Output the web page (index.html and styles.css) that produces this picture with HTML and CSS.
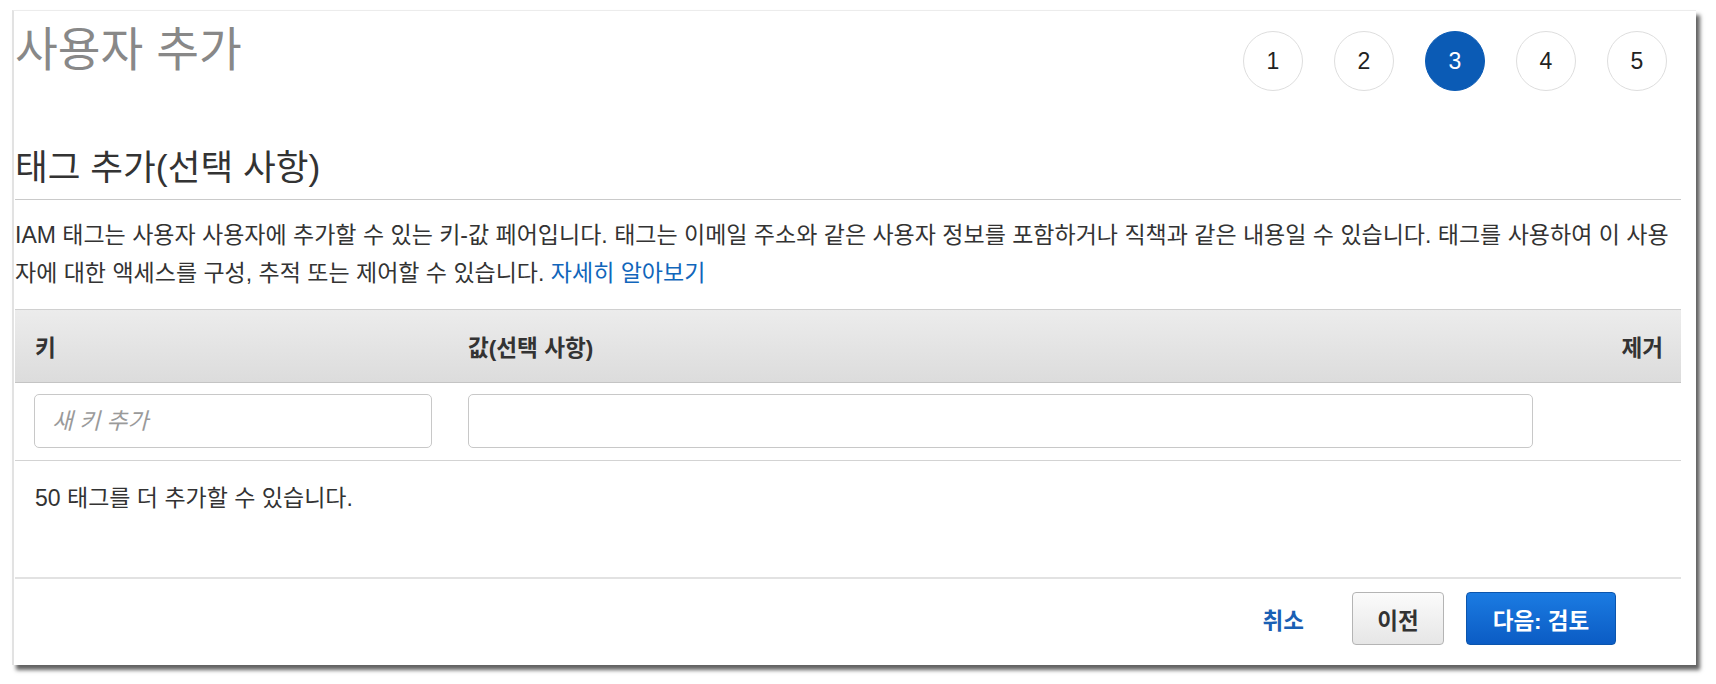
FILE: index.html
```html
<!DOCTYPE html>
<html lang="ko">
<head>
<meta charset="utf-8">
<title>사용자 추가</title>
<link rel="stylesheet" href="styles.css">
</head>
<body>
<div class="page">
<div class="window">
  <header class="top">
    <h1 class="title">사용자 추가</h1>
    <ol class="steps">
      <li class="step">1</li>
      <li class="step">2</li>
      <li class="step active">3</li>
      <li class="step">4</li>
      <li class="step">5</li>
    </ol>
  </header>

  <h2 class="section-title">태그 추가(선택 사항)</h2>
  <p class="desc">IAM 태그는 사용자 사용자에 추가할 수 있는 키-값 페어입니다. 태그는 이메일 주소와 같은 사용자 정보를 포함하거나 직책과 같은 내용일 수 있습니다. 태그를 사용하여 이 사용<br>자에 대한 액세스를 구성, 추적 또는 제어할 수 있습니다. <a class="link" href="#">자세히 알아보기</a></p>

  <div class="tags">
    <div class="tags-grid tags-head">
      <div class="col-key">키</div>
      <div class="col-value">값(선택 사항)</div>
      <div class="col-remove">제거</div>
    </div>
    <div class="tags-grid tags-row">
      <input class="field" type="text" placeholder="새 키 추가">
      <input class="field" type="text">
      <div class="col-remove"></div>
    </div>
  </div>

  <p class="remaining">50 태그를 더 추가할 수 있습니다.</p>

  <footer class="actions">
    <a class="cancel" href="#">취소</a>
    <button class="btn btn-prev" type="button">이전</button>
    <button class="btn btn-next" type="button">다음: 검토</button>
  </footer>
</div>
</div>
</body>
</html>
```

FILE: styles.css
```css
* {
  box-sizing: border-box;
}

html, body {
  margin: 0;
  padding: 0;
  background: #ffffff;
}

body {
  font-family: "Liberation Sans", "Noto Sans CJK KR", sans-serif;
  color: #333333;
}

.page {
  min-height: 684px;
  padding: 10px 0 0 12px;
}

.window {
  width: 1684px;
  height: 655px;
  background: #ffffff;
  border-top: 1px solid #ececec;
  border-left: 2px solid #e2e2e2;
  padding: 0 15px 0 1px;
  box-shadow: 4px 5px 4px rgba(0, 0, 0, 0.62);
}

/* header */
.top {
  margin-top: 13px;
  display: flex;
  justify-content: space-between;
  align-items: flex-start;
}

.title {
  margin: 0;
  font-size: 46.5px;
  line-height: 52px;
  font-weight: normal;
  color: #888888;
}

.steps {
  list-style: none;
  margin: 7px 14px 0 0;
  padding: 0;
  display: flex;
  gap: 31px;
}

.step {
  width: 60px;
  height: 60px;
  border-radius: 50%;
  border: 1.5px solid #dedede;
  display: flex;
  align-items: center;
  justify-content: center;
  font-family: "Liberation Sans", sans-serif;
  font-size: 23px;
  color: #222222;
  background: #ffffff;
}

.step.active {
  background: #0b5bb5;
  border-color: #0b5bb5;
  color: #ffffff;
}

/* section */
.section-title {
  margin: 57px 0 0 0;
  font-size: 35.6px;
  line-height: 40px;
  font-weight: normal;
  color: #333333;
  padding-bottom: 11px;
  border-bottom: 1px solid #cacaca;
}

.desc {
  margin: 16px 0 0 0;
  font-size: 23px;
  line-height: 38px;
  color: #333333;
}

.link {
  color: #1166bb;
  text-decoration: none;
}

/* tags table */
.tags {
  margin-top: 17px;
}

.tags-grid {
  display: grid;
  grid-template-columns: 398px 1065px 1fr;
  column-gap: 36px;
  padding: 0 18px 0 19px;
  align-items: center;
}

.tags-head {
  height: 74px;
  border-top: 1px solid #d0d0d0;
  border-bottom: 1px solid #c4c4c4;
  background: linear-gradient(#ececec, #dcdcdc);
  font-size: 22.6px;
  font-weight: bold;
  color: #333333;
}

.col-key {
  padding-left: 1px;
}

.col-remove {
  text-align: right;
}

.tags-row {
  padding-top: 11px;
  padding-bottom: 12px;
  border-bottom: 1px solid #d3d3d3;
}

.field {
  display: block;
  width: 100%;
  height: 54px;
  margin: 0;
  border: 1px solid #c8c8c8;
  border-radius: 5px;
  padding: 0 17px;
  background: #ffffff;
  font-family: "Liberation Sans", "Noto Sans CJK KR", sans-serif;
  font-size: 22.8px;
  color: #333333;
  outline: none;
}

.field::placeholder {
  color: #9a9a9a;
  font-style: italic;
}

.remaining {
  margin: 18px 0 0 0;
  padding-left: 20px;
  font-size: 23px;
  line-height: 38px;
  color: #333333;
}

/* footer */
.actions {
  margin-top: 60px;
  border-top: 2px solid #e2e2e2;
  padding: 13px 65px 0 0;
  display: flex;
  justify-content: flex-end;
  align-items: center;
}

.cancel {
  font-size: 22.5px;
  font-weight: bold;
  color: #1a5fb4;
  text-decoration: none;
}

.btn {
  height: 53px;
  padding: 0;
  border-radius: 4px;
  font-family: "Liberation Sans", "Noto Sans CJK KR", sans-serif;
  font-size: 22.5px;
  font-weight: bold;
  cursor: pointer;
}

.btn-prev {
  width: 92px;
  margin-left: 48px;
  border: 1px solid #b4b4b4;
  background: linear-gradient(#fbfbfb, #e6e6e6);
  color: #333333;
}

.btn-next {
  width: 150px;
  margin-left: 22px;
  border: 1px solid #0b55ad;
  background: linear-gradient(#1b7be2, #0b5cc4);
  color: #ffffff;
}
```
